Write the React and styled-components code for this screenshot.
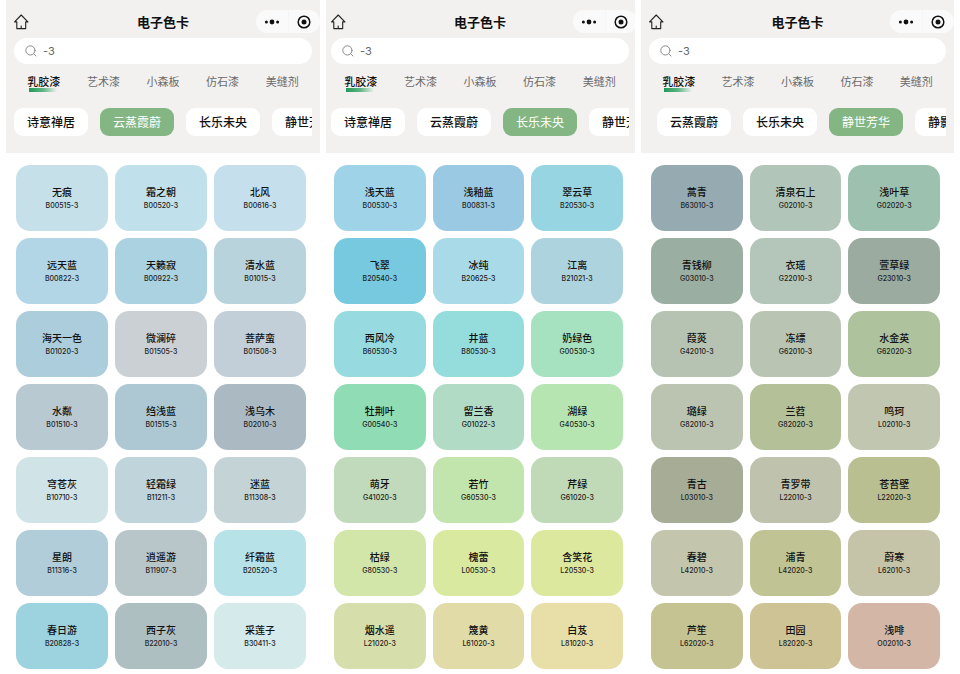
import React from 'react';
import styled, { createGlobalStyle } from 'styled-components';

const GlobalStyle = createGlobalStyle`
  * {
    box-sizing: border-box;
  }
  body {
    margin: 0;
    background: #ffffff;
    font-family: Inter, 'Noto Sans CJK SC', sans-serif;
    color: #111111;
  }
  button, input {
    font-family: inherit;
    border: none;
    margin: 0;
    padding: 0;
  }
  button {
    cursor: pointer;
  }
`;

const Page = styled.main`
  display: grid;
  grid-template-columns: 314fr 309fr 313fr;
  gap: 6px;
  padding: 0 6px;
`;

const Screen = styled.section`
  min-width: 0;
  overflow: hidden;
`;

const Header = styled.header`
  background: #f2f1f0;
  padding: 10px ${props => (props.$narrow ? 6 : 8)}px 17px ${props => (props.$narrow ? 5 : 8)}px;
`;

const NavBar = styled.div`
  display: grid;
  grid-template-columns: 1fr auto 1fr;
  align-items: center;
  height: 23px;
`;

const Title = styled.h1`
  margin: 0;
  font-size: 13px;
  line-height: 20px;
  font-weight: 600;
`;

const HomeButton = styled.button`
  justify-self: start;
  display: flex;
  background: none;
`;

const Capsule = styled.div`
  justify-self: end;
  display: flex;
  width: 64px;
  height: 23px;
  margin-right: -8px;
  border-radius: 12px;
  background: #fafafa;
`;

const CapsuleButton = styled.button`
  flex: 1;
  display: flex;
  align-items: center;
  justify-content: center;
  background: none;
  & + & {
    border-left: 1px solid #f5f5f5;
  }
`;

const SearchBox = styled.label`
  display: flex;
  align-items: center;
  gap: 6px;
  height: 26px;
  margin-top: 5px;
  padding: 0 11px;
  border-radius: 13px;
  background: #ffffff;
`;

const SearchInput = styled.input`
  flex: 1;
  min-width: 0;
  font-size: 11px;
  line-height: 16px;
  color: #666666;
  background: none;
  outline: none;
`;

const Tabs = styled.nav`
  display: flex;
  margin-top: 8px;
`;

const Tab = styled.button`
  flex: 1;
  background: none;
  font-size: 11px;
  line-height: 20px;
  white-space: nowrap;
  font-weight: ${props => (props.$active ? 500 : 400)};
  color: ${props => (props.$active ? '#111111' : '#6b6b6b')};
`;

const TabLabel = styled.span`
  display: inline-block;
  background: ${props => (props.$active
    ? 'linear-gradient(90deg, #23985a, #5db583 50%, #f2f1f0) 2px 100% / 28px 4px no-repeat'
    : 'none')};
`;

const Chips = styled.div`
  display: flex;
  gap: 12px;
  margin-top: 16px;
  padding-left: ${props => (props.$scrolled ? 8 : 0)}px;
  overflow: hidden;
`;

const Chip = styled.button`
  flex: none;
  padding: 5px 13px 3px;
  border-radius: 9px;
  font-size: 12px;
  line-height: 20px;
  font-weight: ${props => (props.$active ? 400 : 500)};
  color: ${props => (props.$active ? '#ffffff' : '#111111')};
  background: ${props => (props.$active ? '#84b684' : '#ffffff')};
`;

const Swatches = styled.ul`
  display: grid;
  grid-template-columns: repeat(3, 1fr);
  gap: 7px;
  list-style: none;
  margin: 0;
  padding: 12px ${props => (props.$narrow ? 12 : 14)}px 5px ${props => (props.$narrow ? 8 : 10)}px;
`;

const Swatch = styled.li`
  display: flex;
  flex-direction: column;
  align-items: center;
  height: 66px;
  padding-top: 20px;
  border-radius: 14px;
  background: ${props => props.$color};
`;

const Name = styled.span`
  font-size: 10px;
  line-height: 15px;
  font-weight: 500;
`;

const Code = styled.span`
  font-size: 7px;
  line-height: 12px;
  font-weight: 500;
  color: #222222;
`;

const tabs = ['乳胶漆', '艺术漆', '小森板', '仿石漆', '美缝剂'];

const screens = [
  {
    chips: ['诗意禅居', '云蒸霞蔚', '长乐未央', '静世芳华'],
    active: '云蒸霞蔚',
    colors: [
      ['无痕', 'B00515-3', '#c6e0ea'], ['霜之朝', 'B00520-3', '#c0e0eb'], ['北风', 'B00616-3', '#c5dfed'],
      ['远天蓝', 'B00822-3', '#b2d6e6'], ['天籁寂', 'B00922-3', '#abd2e1'], ['清水蓝', 'B01015-3', '#b9d3dc'],
      ['海天一色', 'B01020-3', '#abcddc'], ['微澜碎', 'B01505-3', '#cbd0d4'], ['菩萨蛮', 'B01508-3', '#c2cfd8'],
      ['水粼', 'B01510-3', '#b9c9d1'], ['绉浅蓝', 'B01515-3', '#aec8d3'], ['浅乌木', 'B02010-3', '#abbac2'],
      ['穹苍灰', 'B10710-3', '#d0e3e7'], ['轻霜绿', 'B11211-3', '#bfd5db'], ['迷蓝', 'B11308-3', '#c4d4d6'],
      ['星朗', 'B11316-3', '#b0cdd9'], ['逍遥游', 'B11907-3', '#b8c5c9'], ['纤霜蓝', 'B20520-3', '#b7e2e8'],
      ['春日游', 'B20828-3', '#9cd3df'], ['西子灰', 'B22010-3', '#aebfc2'], ['采莲子', 'B30411-3', '#d5ebeb'],
    ],
  },
  {
    narrow: true,
    chips: ['诗意禅居', '云蒸霞蔚', '长乐未央', '静世芳华'],
    active: '长乐未央',
    colors: [
      ['浅天蓝', 'B00530-3', '#9fd4e8'], ['浅釉蓝', 'B00831-3', '#99c9e3'], ['翠云草', 'B20530-3', '#98d5e2'],
      ['飞翠', 'B20540-3', '#76c9df'], ['冰纯', 'B20625-3', '#a9dae8'], ['江离', 'B21021-3', '#add4de'],
      ['西风冷', 'B60530-3', '#97dbe0'], ['井蓝', 'B80530-3', '#95dddc'], ['奶绿色', 'G00530-3', '#a7e2c0'],
      ['牡荆叶', 'G00540-3', '#90dcb5'], ['留兰香', 'G01022-3', '#b1dbc4'], ['湖绿', 'G40530-3', '#b6e5b2'],
      ['萌牙', 'G41020-3', '#c0dabb'], ['若竹', 'G60530-3', '#c2e5ad'], ['芹绿', 'G61020-3', '#c0d9b7'],
      ['枯绿', 'G80530-3', '#d2e6aa'], ['槐蕾', 'L00530-3', '#dae9a0'], ['含笑花', 'L20530-3', '#dde89f'],
      ['烟水遥', 'L21020-3', '#d6deac'], ['篾黄', 'L61020-3', '#e1dba8'], ['白芨', 'L81020-3', '#e7dea8'],
    ],
  },
  {
    scrolled: true,
    chips: ['云蒸霞蔚', '长乐未央', '静世芳华', '静影沉璧'],
    active: '静世芳华',
    colors: [
      ['蒿青', 'B63010-3', '#96abb1'], ['清泉石上', 'G02010-3', '#b2c5b9'], ['浅叶草', 'G02020-3', '#9cc1ae'],
      ['青钱柳', 'G03010-3', '#9aaea2'], ['衣瑶', 'G22010-3', '#b4c6ba'], ['萱草绿', 'G23010-3', '#9bab9f'],
      ['葭菼', 'G42010-3', '#b6c3b3'], ['冻缥', 'G62010-3', '#b9c4b2'], ['水金英', 'G62020-3', '#adc29d'],
      ['璐绿', 'G82010-3', '#bbc4b0'], ['兰苕', 'G82020-3', '#b4c098'], ['鸣珂', 'L02010-3', '#c1c6b0'],
      ['青古', 'L03010-3', '#a7ac96'], ['青罗带', 'L22010-3', '#bfc3ad'], ['苍苔壁', 'L22020-3', '#babf92'],
      ['春碧', 'L42010-3', '#c3c6ac'], ['浦青', 'L42020-3', '#c0c393'], ['蔚寒', 'L62010-3', '#c6c4a8'],
      ['芦笙', 'L62020-3', '#c5c391'], ['田园', 'L82020-3', '#cec395'], ['浅啡', 'O02010-3', '#d3b6a5'],
    ],
  },
];

const HomeIcon = () => (
  <svg width="15" height="16" viewBox="0 0 15 16" fill="none" stroke="#222222" strokeWidth="1.1" strokeLinejoin="round" strokeLinecap="round">
    <path d="M7.2 1 .6 7.9h2.2v6.7h8.9V7.9h2.2Z" />
    <path d="M7.2 12v2.4" />
  </svg>
);

const SearchIcon = () => (
  <svg width="12" height="12" viewBox="0 0 12 12" fill="none" stroke="#8a8a8a" strokeLinecap="round">
    <circle cx="5.4" cy="5.4" r="4.6" />
    <path d="m8.8 8.8 2.2 2.2" />
  </svg>
);

const DotsIcon = () => (
  <svg width="16" height="6" viewBox="0 0 16 6" fill="#111111">
    <circle cx="2.4" cy="3" r="1.5" />
    <circle cx="8" cy="3" r="2.4" />
    <circle cx="13.6" cy="3" r="1.5" />
  </svg>
);

const TargetIcon = () => (
  <svg width="14" height="14" viewBox="0 0 14 14">
    <circle cx="7" cy="7" r="5.8" fill="none" stroke="#111111" strokeWidth="1.5" />
    <circle cx="7" cy="7" r="2.5" fill="#111111" />
  </svg>
);

const ColorCard = ({ chips, active, colors, narrow, scrolled }) => (
  <Screen>
    <Header $narrow={narrow}>
      <NavBar>
        <HomeButton aria-label="首页"><HomeIcon /></HomeButton>
        <Title>电子色卡</Title>
        <Capsule>
          <CapsuleButton aria-label="更多"><DotsIcon /></CapsuleButton>
          <CapsuleButton aria-label="关闭"><TargetIcon /></CapsuleButton>
        </Capsule>
      </NavBar>
      <SearchBox>
        <SearchIcon />
        <SearchInput type="text" aria-label="搜索" defaultValue="-3" />
      </SearchBox>
      <Tabs>
        {tabs.map((tab, i) => (
          <Tab key={tab} $active={i === 0}>
            <TabLabel $active={i === 0}>{tab}</TabLabel>
          </Tab>
        ))}
      </Tabs>
      <Chips $scrolled={scrolled}>
        {chips.map(chip => (
          <Chip key={chip} $active={chip === active}>{chip}</Chip>
        ))}
      </Chips>
    </Header>
    <Swatches $narrow={narrow}>
      {colors.map(([name, code, color]) => (
        <Swatch key={code} $color={color}>
          <Name>{name}</Name>
          <Code>{code}</Code>
        </Swatch>
      ))}
    </Swatches>
  </Screen>
);

const App = () => (
  <>
    <GlobalStyle />
    <Page>
      {screens.map(screen => (
        <ColorCard key={screen.active} {...screen} />
      ))}
    </Page>
  </>
);

export default App;
